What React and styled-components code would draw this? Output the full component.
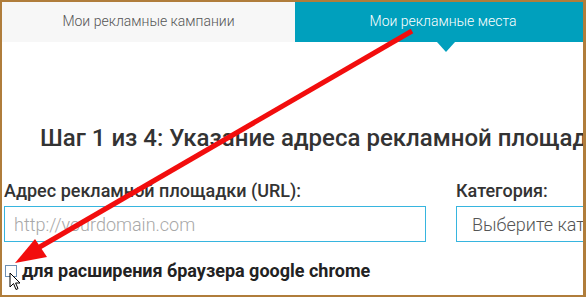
import React from "react"
import styled, { createGlobalStyle } from "styled-components"

const GlobalStyle = createGlobalStyle`
  html, body {
    margin: 0;
    padding: 0;
    background: #fff;
  }
  body {
    font-family: Roboto, "Noto Sans", "Liberation Sans", sans-serif;
  }
  * {
    box-sizing: border-box;
  }
`

const Frame = styled.div`
  position: relative;
  width: 586px;
  height: 297px;
  border: 2px solid #b07d3b;
  border-right-width: 3px;
  overflow: hidden;
  background: #fff;
`

const Tabs = styled.div`
  display: flex;
  height: 40px;
`

const Tab = styled.div`
  position: relative;
  flex: ${props => (props.active ? "0 0 296px" : "0 0 293px")};
  display: flex;
  align-items: center;
  justify-content: center;
  padding-bottom: 3px;
  font-size: 14px;
  font-weight: 300;
  color: ${props => (props.active ? "#fff" : "#555")};
  background: ${props => (props.active ? "#00a0bd" : "#f7f7f7")};

  ${props =>
    props.active &&
    `
    &:after {
      content: "";
      position: absolute;
      left: 142px;
      bottom: -10px;
      border-left: 9px solid transparent;
      border-right: 9px solid transparent;
      border-top: 10px solid #00a0bd;
    }
  `}
`

const Body = styled.div`
  padding: 82px 0 0 2px;
`

const Heading = styled.h1`
  margin: 0 0 28px 36px;
  font-size: 24px;
  line-height: 28px;
  font-weight: 500;
  color: #333;
  white-space: nowrap;
`

const FormRow = styled.div`
  display: flex;
  gap: 30px;
`

const Field = styled.div`
  display: flex;
  flex-direction: column;
  gap: 5px;
  flex: ${props => props.grow || "0 0 422px"};
`

const Label = styled.label`
  font-size: 18px;
  line-height: 21px;
  font-weight: 500;
  color: #333;
  white-space: nowrap;
`

const Input = styled.div`
  height: 36px;
  width: 100%;
  border: 1px solid #37b5df;
  display: flex;
  align-items: center;
  padding-left: ${props => props.pad || 9}px;
  font-size: 18px;
  font-weight: 300;
  color: ${props => (props.placeholder ? "#a8a8a8" : "#555")};
  white-space: nowrap;
  overflow: hidden;
`

const CheckRow = styled.div`
  display: flex;
  align-items: center;
  gap: 5px;
  margin-top: 18px;
  margin-left: 1px;
`

const CheckBox = styled.span`
  width: 12px;
  height: 12px;
  border: 1px solid #6d8fb3;
  background: #fff;
`

const CheckLabel = styled.span`
  font-size: 18px;
  line-height: 22px;
  font-weight: 700;
  color: #222;
`

const Overlay = styled.svg`
  position: absolute;
  left: -2px;
  top: -2px;
  pointer-events: none;
`

const Cursor = styled.svg`
  position: absolute;
  left: 7px;
  top: 270px;
`

export default function App() {
  return (
    <Frame>
      <GlobalStyle />
      <Tabs>
        <Tab>Мои рекламные кампании</Tab>
        <Tab active>Мои рекламные места</Tab>
      </Tabs>
      <Body>
        <Heading>Шаг 1 из 4: Указание адреса рекламной площадки</Heading>
        <FormRow>
          <Field>
            <Label>Адрес рекламной площадки (URL):</Label>
            <Input placeholder="1">http://yourdomain.com</Input>
          </Field>
          <Field grow="0 0 300px">
            <Label>Категория:</Label>
            <Input pad={15}>Выберите категорию</Input>
          </Field>
        </FormRow>
        <CheckRow>
          <CheckBox />
          <CheckLabel>для расширения браузера google chrome</CheckLabel>
        </CheckRow>
      </Body>
      <Overlay width="586" height="297" viewBox="0 0 586 297">
        <line x1="412" y1="31" x2="38" y2="248" stroke="#f20d0d" strokeWidth="5" />
        <polygon points="15,263 47,257 35,239" fill="#f20d0d" />
      </Overlay>
      <Cursor width="12" height="19" viewBox="0 0 12 19">
        <path
          d="M1 1 L1 15 L4.5 11.5 L7 17.5 L9 16.6 L6.6 11 L11 11 Z"
          fill="#fff"
          stroke="#000"
          strokeWidth="1"
          strokeLinejoin="round"
        />
      </Cursor>
    </Frame>
  )
}
